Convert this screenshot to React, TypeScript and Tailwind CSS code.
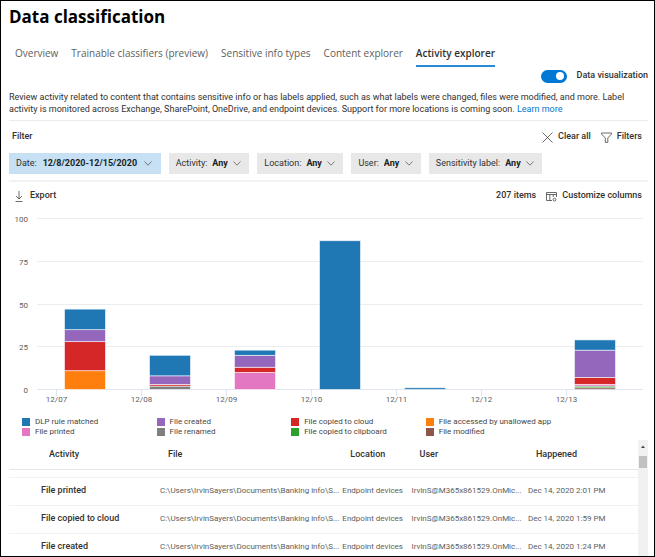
import React from "react";

const TABS = [
  "Overview",
  "Trainable classifiers (preview)",
  "Sensitive info types",
  "Content explorer",
  "Activity explorer",
];

const FILTERS = [
  { label: "Date:", value: "12/8/2020-12/15/2020", active: true },
  { label: "Activity:", value: "Any", active: false },
  { label: "Location:", value: "Any", active: false },
  { label: "User:", value: "Any", active: false },
  { label: "Sensitivity label:", value: "Any", active: false },
];

const BLUE = "#1f77b4";
const PURPLE = "#9467bd";
const RED = "#d62728";
const ORANGE = "#ff7f0e";
const PINK = "#e377c2";
const GRAY = "#7f7f7f";
const GREEN = "#2ca02c";
const BROWN = "#8c564b";

type Segment = [color: string, count: number];

// Segments are listed from the baseline upwards.
const DAYS: { day: string; stack: Segment[] }[] = [
  { day: "12/07", stack: [[ORANGE, 11], [RED, 17], [PURPLE, 7], [BLUE, 12]] },
  { day: "12/08", stack: [[GRAY, 2], [RED, 1], [PURPLE, 5], [BLUE, 12]] },
  { day: "12/09", stack: [[PINK, 10], [RED, 3], [PURPLE, 7], [BLUE, 3]] },
  { day: "12/10", stack: [[BLUE, 87]] },
  { day: "12/11", stack: [[BLUE, 1]] },
  { day: "12/12", stack: [] },
  { day: "12/13", stack: [[BROWN, 1], [GREEN, 1], [PINK, 1], [RED, 4], [PURPLE, 16], [BLUE, 6]] },
];

const LEGEND = [
  ["DLP rule matched", BLUE],
  ["File created", PURPLE],
  ["File copied to cloud", RED],
  ["File accessed by unallowed app", ORANGE],
  ["File printed", PINK],
  ["File renamed", GRAY],
  ["File copied to clipboard", GREEN],
  ["File modified", BROWN],
];

const ROWS = [
  ["File printed", "Dec 14, 2020 2:01 PM"],
  ["File copied to cloud", "Dec 14, 2020 1:59 PM"],
  ["File created", "Dec 14, 2020 1:24 PM"],
];

const BASE = 179;
const UNIT = 1.71;

function Chart() {
  return (
    <svg viewBox="0 0 639 202" className="block w-full" role="img" aria-label="Activity by day">
      {[0, 25, 50, 75, 100].map((v) => {
        const y = Math.round(BASE - v * UNIT) + 0.5;
        return (
          <g key={v}>
            <line x1="28" x2="634" y1={y} y2={y} stroke={v === 0 ? "#dfe5f2" : "#ececec"} />
            <text x="19" y={y + 3} textAnchor="end" className="fill-[#605e5c] text-[8px]">
              {v}
            </text>
          </g>
        );
      })}
      {DAYS.map(({ day, stack }, i) => {
        const x = 47.5 + i * 85;
        let total = 0;
        return (
          <g key={day}>
            <line x1={x} x2={x} y1={BASE} y2={BASE + 7} stroke="#dfe5f2" />
            <text x={x} y={BASE + 13} textAnchor="middle" className="fill-[#605e5c] text-[8px]">
              {day}
            </text>
            {stack.map(([color, count]) => {
              total += count;
              return (
                <rect
                  key={color}
                  x={x + 8}
                  y={BASE + 0.5 - total * UNIT}
                  width="41"
                  height={count * UNIT}
                  fill={color}
                  stroke="#ffffff"
                  strokeOpacity="0.7"
                  strokeWidth="0.8"
                />
              );
            })}
          </g>
        );
      })}
    </svg>
  );
}

function Chevron() {
  return (
    <svg viewBox="0 0 8 5" className="pointer-events-none h-[5px] w-2 shrink-0" fill="none" stroke="#605e5c" strokeWidth="0.8">
      <path d="M0.5 0.5 4 4.2 7.5 0.5" />
    </svg>
  );
}

export default function App() {
  return (
    <main className="flex h-screen flex-col overflow-hidden border border-black bg-white pr-[6px] pl-2 font-[Roboto,'Noto_Sans',sans-serif] text-[#323130]">
      <h1 className="mt-1 font-['Open_Sans','Noto_Sans',sans-serif] text-[17px] leading-6 font-bold text-black">
        Data classification
      </h1>

      <nav className="mt-4 ml-[6px] flex gap-[13px] font-['Open_Sans','Noto_Sans',sans-serif] text-[10px] leading-4 whitespace-nowrap text-[#605e5c]">
        {TABS.map((tab) =>
          tab === "Activity explorer" ? (
            <a key={tab} href="#" aria-current="page" className="border-b-2 border-[#2b88d8] pb-1 font-semibold text-[#323130]">
              {tab}
            </a>
          ) : (
            <a key={tab} href="#" className="pb-1">
              {tab}
            </a>
          ),
        )}
      </nav>

      <label className="mt-px flex h-4 items-center gap-[10px] self-end text-[9px] font-medium">
        <input
          type="checkbox"
          role="switch"
          defaultChecked
          className="flex h-[13px] w-[26px] appearance-none items-center justify-end rounded-full bg-[#0078d4] pr-[3px] before:size-2 before:rounded-full before:bg-white"
        />
        Data visualization
      </label>

      <p className="mt-[7px] border-b border-[#edebe9] pb-[5px] text-[9px] leading-[12px]">
        Review activity related to content that contains sensitive info or has labels applied, such as what labels were changed, files were modified, and more. Label
        activity is monitored across Exchange, SharePoint, OneDrive, and endpoint devices. Support for more locations is coming soon.{" "}
        <a href="#" className="text-[#0078d4]">
          Learn more
        </a>
      </p>

      <div className="mt-2 flex h-4 items-center justify-between pr-[6px] pl-[3px] text-[9px] font-medium">
        <h2>Filter</h2>
        <div className="flex gap-[10px]">
          <button type="button" className="flex items-center gap-[5px]">
            <svg viewBox="0 0 11 11" className="size-[11px]" stroke="#484644" strokeWidth="0.8">
              <path d="M0.5 0.5 10.5 10.5M10.5 0.5 0.5 10.5" />
            </svg>
            Clear all
          </button>
          <button type="button" className="flex items-center gap-[5px]">
            <svg viewBox="0 0 11 11" className="size-[11px]" fill="none" stroke="#484644" strokeWidth="0.8">
              <path d="M0.5 1h10v1L6.8 6v4.4H4.3V6L0.5 2z" />
            </svg>
            Filters
          </button>
        </div>
      </div>

      <div className="mt-2 flex gap-2 border-b-2 border-[#f3f2f1] pb-[6px] text-[9px]">
        {FILTERS.map(({ label, value, active }) => (
          <label
            key={label}
            className={
              active
                ? "flex h-[21px] items-center gap-[6px] bg-[#c7e0f4] pr-[9px] pl-[7px] whitespace-nowrap"
                : "flex h-[21px] items-center gap-[5px] bg-[#e8e8e8] pr-2 pl-[7px] whitespace-nowrap"
            }
          >
            {label}
            <select className="appearance-none bg-transparent font-bold text-[#201f1e] outline-none">
              <option>{value}</option>
            </select>
            <Chevron />
          </label>
        ))}
      </div>

      <div className="mt-[6px] flex h-4 items-center pr-[6px] pl-[6px] text-[9px] font-medium">
        <button type="button" className="flex items-center gap-[7px]">
          <svg viewBox="0 0 8 11" className="h-[11px] w-2" fill="none" stroke="#484644" strokeWidth="0.8">
            <path d="M4 0v8M1 5l3 3 3-3M0.5 10.5h7" />
          </svg>
          Export
        </button>
        <span className="ml-auto">207 items</span>
        <button type="button" className="ml-[10px] flex items-center gap-[5px]">
          <svg viewBox="0 0 11 11" className="size-[11px]" fill="none" stroke="#484644" strokeWidth="0.8">
            <path d="M6 9.5H0.5v-8h10v4.5M0.5 3.5h10M3.8 3.5v6M7.2 3.5v2.5" />
            <circle cx="8.5" cy="8.6" r="1.4" />
          </svg>
          Customize columns
        </button>
      </div>

      <div className="mt-[6px]">
        <Chart />
      </div>

      <ul className="mt-[5px] grid grid-cols-[repeat(4,21.5%)] pl-[13px] text-[8px] leading-[10px] whitespace-nowrap text-[#484644]">
        {LEGEND.map(([name, color]) => (
          <li key={name} className="flex items-center gap-[5px]">
            <span className="size-2" style={{ backgroundColor: color }} />
            {name}
          </li>
        ))}
      </ul>

      <div className="mt-[3px] flex min-h-0 flex-1">
        <div className="min-w-0 flex-1 overflow-hidden">
          <table className="w-full table-fixed text-left text-[8px] whitespace-nowrap text-[#605e5c]">
            <thead className="text-[9px] text-[#323130]">
              <tr className="h-[29px] border-b border-[#e6e6e6]">
                <th className="w-[24%] pl-10 font-medium">Activity</th>
                <th className="w-[29%] pl-2 font-medium">File</th>
                <th className="w-[11%] pl-2 font-medium">Location</th>
                <th className="w-[18.5%] pl-2 font-medium">User</th>
                <th className="pl-2 font-medium">Happened</th>
              </tr>
            </thead>
            <tbody>
              <tr className="h-2 border-b border-[#f3f2f1]">
                <td colSpan={5} />
              </tr>
              {ROWS.map(([activity, time]) => (
                <tr key={activity} className="h-7 border-b border-[#f3f2f1]">
                  <th scope="row" className="pl-8 text-[9px] font-medium text-[#323130]">
                    {activity}
                  </th>
                  <td>C:\Users\IrvinSayers\Documents\Banking info\S...</td>
                  <td>Endpoint devices</td>
                  <td>IrvinS@M365x861529.OnMic...</td>
                  <td>{time}</td>
                </tr>
              ))}
            </tbody>
          </table>
        </div>
        <div className="flex w-[10px] flex-col items-center bg-[#f1f1f1]">
          <svg viewBox="0 0 10 16" className="h-4 w-[10px]" fill="#484644">
            <path d="M3 8 5 5.5 7 8z" />
          </svg>
          <div className="h-3 w-2 bg-[#c1c1c1]" />
        </div>
      </div>
    </main>
  );
}
